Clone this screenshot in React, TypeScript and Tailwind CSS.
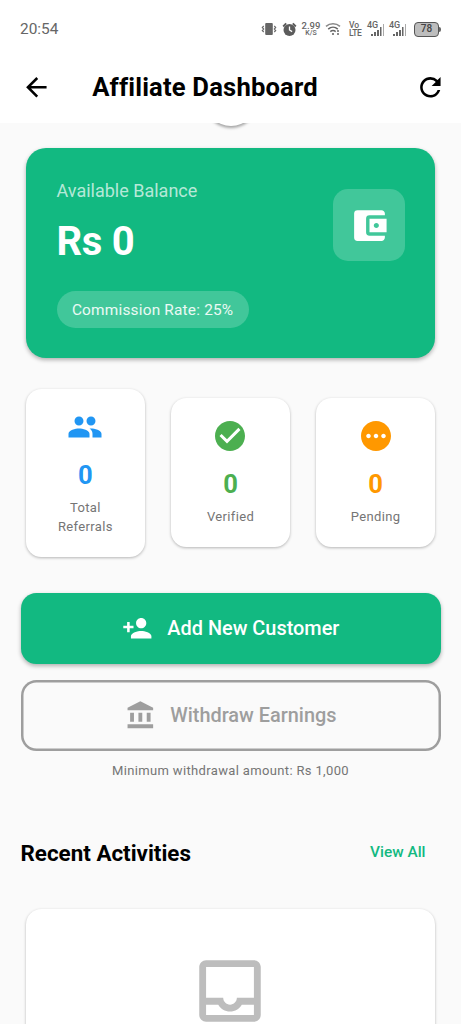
import {
    MdAccountBalance,
    MdAccountBalanceWallet,
    MdArrowBack,
    MdCheckCircle,
    MdOutlineInbox,
    MdPending,
    MdPeople,
    MdPersonAdd,
    MdRefresh,
} from 'react-icons/md'
import type { ReactNode } from 'react'

function SignalBars(){
    return (
        <div className="relative h-4 w-[18px]">
            <span className="absolute left-0 top-0 text-[9px] leading-[9px] font-medium tracking-[-0.2px]">4G</span>
            <svg className="absolute bottom-0 left-0" width="18" height="16" viewBox="0 0 18 16" fill="#666">
                <rect x="4" y="13" width="2" height="2" />
                <rect x="7" y="11" width="2" height="4" />
                <rect x="10" y="9" width="2" height="6" />
                <rect x="13" y="6" width="1.5" height="9" />
                <rect x="16" y="3" width="1" height="12" fill="#aaa" />
            </svg>
        </div>
    )
}

function StatusBar(){
    return (
        <div className="flex h-[51px] items-center justify-between pl-5 pr-[20px] pt-[7px] text-[#666]">
            <span className="pt-[2px] text-[15.4px]">20:54</span>
            <div className="flex h-4 items-center">
                <svg width="16" height="14" viewBox="0 0 16 14" fill="none" stroke="#666" strokeWidth="1.1">
                    <rect x="4.2" y="1" width="7.6" height="12" rx="1" fill="#666" stroke="none" />
                    <path d="M2.7 4 1.3 5.5 2.7 7 1.3 8.5 2.7 10M13.3 4l1.4 1.5L13.3 7l1.4 1.5-1.4 1.5" />
                </svg>
                <svg className="ml-[5px]" width="15" height="15" viewBox="0 0 15 15" fill="#5c5c5c">
                    <circle cx="7.5" cy="8" r="6" />
                    <path d="M1.2 4.5 4.2 1.4M13.8 4.5l-3-3.1" stroke="#5c5c5c" strokeWidth="1.9" />
                    <path d="M7.5 4.5V8l2.6 1.6" stroke="#fff" strokeWidth="1.3" fill="none" />
                </svg>
                <div className="ml-1 flex w-5 flex-col items-center font-medium">
                    <span className="text-[9.5px] leading-[9px]">2.99</span>
                    <span className="text-[7px] leading-[7px]">K/S</span>
                </div>
                <svg className="ml-[4px]" width="16" height="14" viewBox="0 0 16 14" fill="none" stroke="#666" strokeWidth="1.5">
                    <path d="M1 4.4c4-3.5 10-3.5 14 0" stroke="#888" />
                    <path d="M3.2 7.1c2.8-2.4 6.8-2.4 9.6 0" />
                    <path d="M5.3 9.6c1.6-1.3 3.8-1.3 5.4 0" />
                    <circle cx="8" cy="12" r="1.1" fill="#666" stroke="none" />
                    <path d="M13 8v5" strokeDasharray="2 1" />
                </svg>
                <div className="ml-2 flex w-[13px] flex-col items-start font-medium">
                    <span className="text-[8.5px] leading-[8px]">Vo</span>
                    <span className="text-[8.5px] leading-[8px] tracking-[-0.4px]">LTE</span>
                </div>
                <div className="ml-[5px]"><SignalBars /></div>
                <div className="ml-[4px]"><SignalBars /></div>
                <div className="ml-[7px] flex items-center">
                    <span className="flex h-[15px] w-[25px] items-center justify-center rounded-[4px] border border-[#555] bg-[#bdbdbd] text-[10px] leading-none font-medium text-[#444]">78</span>
                    <span className="h-[5px] w-[2px] rounded-r bg-[#666]" />
                </div>
            </div>
        </div>
    )
}

function Header(){
    return (
        <header className="flex h-[72px] items-center pl-[21px] pr-[15px] text-black">
            <MdArrowBack size={30.7} />
            <h1 className="ml-[40.5px] flex-1 text-[25.6px] font-bold tracking-[0.18px]">Affiliate Dashboard</h1>
            <MdRefresh size={30.7} />
        </header>
    )
}

function BalanceCard(){
    return (
        <div className="ml-[5px] mr-[5.4px] flex h-[209.6px] items-start justify-between rounded-[20px] bg-[#12b981] pl-[31px] pr-[30px] pt-[31px] shadow-[0_2px_4px_rgba(0,0,0,0.3)]">
            <div className="flex flex-col items-start">
                <p className="text-[18px] leading-[24px] text-white/70">Available Balance</p>
                <p className="mt-[12px] text-[40px] leading-[54px] font-bold tracking-[-0.3px] text-white">Rs 0</p>
                <span className="mt-[22px] flex h-[37px] items-center rounded-full bg-white/20 px-[15.4px] pt-px text-[15.4px] tracking-[0.2px] text-white/90">
                    Commission Rate: 25%
                </span>
            </div>
            <div className="mt-[10px] flex size-[72px] items-center justify-center rounded-[15px] bg-white/20 text-white">
                <MdAccountBalanceWallet size={41} />
            </div>
        </div>
    )
}

function StatCard({ icon, label, color }: { icon: ReactNode, label: string, color: string }){
    return (
        <div className="mx-[5px] flex flex-1 flex-col items-center rounded-[15.4px] bg-white px-5 pb-[21px] pt-[20px] text-center shadow-[0_1px_3px_rgba(0,0,0,0.28)]">
            <div className={color}>{icon}</div>
            <p className={`mt-[12px] text-[25.6px] leading-[36px] font-bold ${color}`}>0</p>
            <p className="mt-[5px] text-[13px] leading-[19px] tracking-[0.35px] text-[#757575]">{label}</p>
        </div>
    )
}

export default function App(){
    return (
        <div className="h-[1024px] w-[461px] overflow-hidden bg-[#fafafa] font-['Roboto',sans-serif]">
            <div className="relative z-10 bg-white">
                <StatusBar />
                <Header />
            </div>
            <main className="relative px-[20.5px] pt-[25.4px]">
                {/* pull to refresh bubble, sliding out from under the header */}
                <div className="absolute left-1/2 top-[-49px] size-[52px] -translate-x-1/2 rounded-full bg-white shadow-[0_2px_3px_rgba(0,0,0,0.35)]" />
                <BalanceCard />
                <div className="mt-[31px] flex items-center gap-[15.4px]">
                    <StatCard icon={<MdPeople size={36} />} label="Total Referrals" color="text-[#2196f3]" />
                    <StatCard icon={<MdCheckCircle size={36} />} label="Verified" color="text-[#4caf50]" />
                    <StatCard icon={<MdPending size={36} />} label="Pending" color="text-[#ff9800]" />
                </div>
                <button className="mt-[36px] flex h-[71px] w-full items-center justify-center gap-[15px] rounded-[15.4px] bg-[#12b981] text-[19.9px] font-medium text-white shadow-[0_2px_4px_rgba(0,0,0,0.3)]">
                    <MdPersonAdd size={30.7} />
                    Add New Customer
                </button>
                <button className="mt-4 flex h-[71px] w-full items-center justify-center gap-[15px] rounded-[15.4px] text-[19.9px] font-medium text-[#9e9e9e] shadow-[inset_0_0_0_2.5px_#9e9e9e]">
                    <MdAccountBalance size={30.7} />
                    Withdraw Earnings
                </button>
                <p className="mt-[10px] text-center text-[13px] leading-5 tracking-[0.35px] text-[#757575]">Minimum withdrawal amount: Rs 1,000</p>
                <div className="mt-[57px] flex items-center justify-between pr-[15px]">
                    <h2 className="text-[22.4px] leading-[30px] font-bold text-black">Recent Activities</h2>
                    <a className="text-[15.4px] font-medium text-[#12b981]">View All</a>
                </div>
                <div className="ml-[5px] mr-[5.4px] mt-[41px] flex h-[240px] justify-center rounded-[15.4px] bg-white pt-[41px] text-[#bdbdbd] shadow-[0_1px_3px_rgba(0,0,0,0.28)]">
                    <MdOutlineInbox size={82} />
                </div>
            </main>
        </div>
    )
}
